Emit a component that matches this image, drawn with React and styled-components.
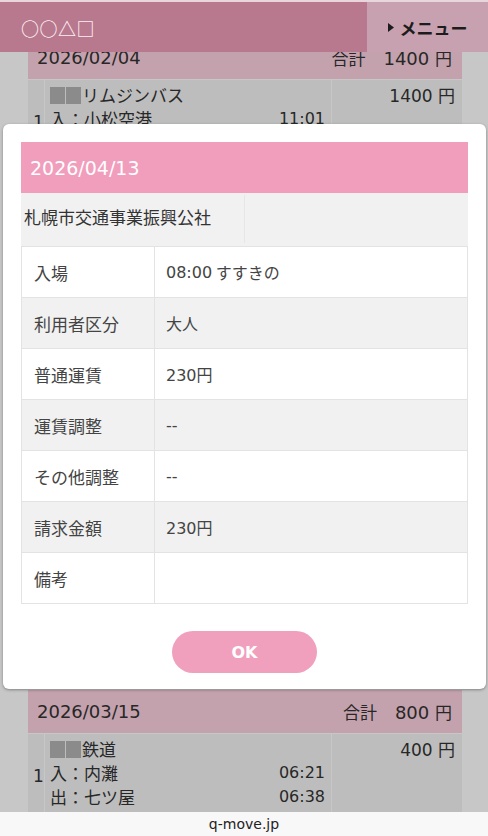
import React from "react";
import styled, { createGlobalStyle } from "styled-components";

const GlobalStyle = createGlobalStyle`
  html, body {
    margin: 0;
    padding: 0;
    background: #ffffff;
  }
  body {
    font-family: "DejaVu Sans", "Noto Sans CJK JP", sans-serif;
    color: #333333;
  }
  * {
    box-sizing: border-box;
  }
`;

const Frame = styled.div`
  width: 488px;
  height: 836px;
  display: flex;
  flex-direction: column;
  overflow: hidden;
`;

const Screen = styled.div`
  position: relative;
  flex: 1;
  overflow: hidden;
  background: #ffffff;
`;

/* the bar stays on top of the dimmed page, with its own darker tones */
const Header = styled.header`
  position: absolute;
  top: 0;
  left: 0;
  right: 0;
  height: 52px;
  display: flex;
  border-top: 2px solid #e9d6dc;
  z-index: 5;
`;

const Title = styled.div`
  flex: 1;
  display: flex;
  align-items: center;
  padding: 2px 0 0 21px;
  background: #b8788e;
  color: #fdeef3;
  font-family: "Noto Sans CJK JP", sans-serif;
  font-weight: 700;
  font-size: 18px;
  letter-spacing: 0.5px;
`;

const MenuButton = styled.div`
  width: 121px;
  display: flex;
  align-items: center;
  justify-content: center;
  gap: 6px;
  padding-top: 1px;
  background: #c8a1b0;
  color: #1c1c1c;
  font-family: "Noto Sans CJK JP", sans-serif;
  font-weight: 700;
  font-size: 17px;

  svg {
    display: block;
  }
`;

const List = styled.div`
  padding: 36px 26px 0 28px;
`;

const Group = styled.section`
  margin-bottom: 5px;
`;

const DateRow = styled.div`
  height: 43px;
  display: flex;
  align-items: center;
  justify-content: space-between;
  padding: 0 10px 0 9px;
  background: #fbd0de;
  font-size: 18px;
  color: #333333;
`;

const Total = styled.div`
  display: flex;
  align-items: center;

  span + span {
    margin-left: 18px;
  }
`;

const Label = styled.span`
  font-family: "Noto Sans CJK JP", sans-serif;
  font-size: 17px;
`;

const ItemRow = styled.div`
  display: grid;
  grid-template-columns: 17px 287px 1fr;
  background: #f3f3f3;
  border-top: 1px solid #ffffff;
  font-size: 17px;
  line-height: 24px;
`;

const IndexCell = styled.div`
  display: flex;
  align-items: center;
  padding-left: 5px;
  border-right: 1px solid #ffffff;
`;

const DetailCell = styled.div`
  padding: 3px 6px 9px 5px;
  border-right: 1px solid #ffffff;
`;

const Line = styled.div`
  display: flex;
  justify-content: space-between;
  font-family: "Noto Sans CJK JP", sans-serif;
  font-size: 17px;
`;

const Time = styled.span`
  font-family: "DejaVu Sans", sans-serif;
  font-size: 16px;
`;

const Masked = styled.span`
  display: inline-flex;
  gap: 1px;
  vertical-align: -2px;
  margin-right: 1px;

  i {
    display: block;
    width: 15px;
    height: 17px;
    background: #b2b2b2;
  }
`;

const AmountCell = styled.div`
  padding: 3px 7px;
  text-align: right;
`;

const Overlay = styled.div`
  position: absolute;
  inset: 0;
  background: rgba(0, 0, 0, 0.22);
  z-index: 3;
`;

const Modal = styled.div`
  position: absolute;
  top: 124px;
  left: 3px;
  right: 2px;
  z-index: 4;
  background: #ffffff;
  border-radius: 6px;
  box-shadow: 0 1px 3px rgba(0, 0, 0, 0.35);
  padding: 18px 18px 16px;
  display: flex;
  flex-direction: column;
`;

const ModalHead = styled.div`
  height: 51px;
  display: flex;
  align-items: center;
  padding-left: 9px;
  background: #f19ebd;
  color: #ffffff;
  font-size: 19px;
`;

const Company = styled.div`
  height: 53px;
  display: flex;
  background: #f1f1f1;
  font-family: "Noto Sans CJK JP", sans-serif;
  font-size: 17px;
  color: #333333;
`;

const CompanyName = styled.div`
  width: 224px;
  display: flex;
  align-items: center;
  padding: 0 0 6px 3px;
  border-right: 1px solid #e6e6e6;
  margin: 2px 0 3px;
`;

const Table = styled.div`
  border: 1px solid #e3e3e3;
  border-bottom: none;
`;

const Row = styled.div`
  height: 51px;
  display: grid;
  grid-template-columns: 133px 1fr;
  background: ${(p) => (p.$shaded ? "#f1f1f1" : "#ffffff")};
  border-bottom: 1px solid #e3e3e3;
  color: #444444;
`;

const RowLabel = styled.div`
  display: flex;
  align-items: center;
  padding-left: 12px;
  border-right: 1px solid #e3e3e3;
  font-family: "Noto Sans CJK JP", sans-serif;
  font-size: 17px;
`;

const RowValue = styled.div`
  display: flex;
  align-items: center;
  padding-left: 11px;
  font-size: 16px;

  .jp {
    font-family: "Noto Sans CJK JP", sans-serif;
    font-size: 16px;
  }
`;

const OkButton = styled.button`
  align-self: center;
  margin-top: 27px;
  width: 145px;
  height: 42px;
  border: none;
  border-radius: 21px;
  background: #f09fbd;
  color: #ffffff;
  font-family: "DejaVu Sans", sans-serif;
  font-weight: 700;
  font-size: 16px;
  cursor: pointer;
`;

const Footer = styled.footer`
  height: 24px;
  display: flex;
  align-items: center;
  justify-content: center;
  background: #f8f8f8;
  color: #222222;
  font-size: 14px;
`;

const GROUPS = [
  {
    date: "2026/02/04",
    total: "1400",
    items: [
      { name: "リムジンバス", from: "小松空港", in: "11:01", to: "金沢駅西口", out: "11:41", amount: "1400" },
      { name: "鉄道", from: "金沢", in: "12:10", to: "西金沢", out: "12:14", via: "乗換：北陸本線", amount: "200" },
      { name: "バス", from: "香林坊", in: "13:02", to: "兼六園下", out: "13:08", amount: "210" }
    ]
  },
  {
    date: "2026/03/01",
    total: "620",
    items: [
      { name: "鉄道", from: "野町", in: "08:11", to: "鶴来", out: "08:40", via: "乗換：石川線", amount: "400" },
      { name: "バス", from: "金沢駅", in: "09:30", to: "武蔵ヶ辻", out: "09:36", amount: "210" },
      { name: "バス", from: "武蔵ヶ辻", in: "18:02", to: "金沢駅", out: "18:09", amount: "210" }
    ]
  },
  {
    date: "2026/03/15",
    total: "800",
    items: [
      { name: "鉄道", from: "内灘", in: "06:21", to: "七ツ屋", out: "06:38", amount: "400" },
      { name: "鉄道", from: "七ツ屋", in: "17:50", to: "内灘", out: "18:07", amount: "400" }
    ]
  }
];

const DETAIL = [
  { label: "入場", value: "08:00", place: "すすきの" },
  { label: "利用者区分", value: "大人", jp: true },
  { label: "普通運賃", value: "230円" },
  { label: "運賃調整", value: "--" },
  { label: "その他調整", value: "--" },
  { label: "請求金額", value: "230円" },
  { label: "備考", value: "" }
];

function Yen({ value }) {
  return (
    <>
      {value} <Label>円</Label>
    </>
  );
}

function Item({ index, item }) {
  return (
    <ItemRow>
      <IndexCell>{index}</IndexCell>
      <DetailCell>
        <Line>
          <span>
            <Masked>
              <i />
              <i />
            </Masked>
            {item.name}
          </span>
        </Line>
        <Line>
          <span>入：{item.from}</span>
          <Time>{item.in}</Time>
        </Line>
        <Line>
          <span>出：{item.to}</span>
          <Time>{item.out}</Time>
        </Line>
        {item.via && (
          <Line>
            <span>{item.via}</span>
          </Line>
        )}
      </DetailCell>
      <AmountCell>
        <Yen value={item.amount} />
      </AmountCell>
    </ItemRow>
  );
}

function DetailValue({ row }) {
  if (row.jp) return <span className="jp">{row.value}</span>;
  if (row.value.endsWith("円")) {
    return (
      <span>
        {row.value.slice(0, -1)}
        <span className="jp">円</span>
      </span>
    );
  }
  return (
    <>
      <span>{row.value}</span>
      {row.place && <span className="jp">&nbsp;{row.place}</span>}
    </>
  );
}

export default function App() {
  return (
    <Frame>
      <GlobalStyle />
      <Screen>
        <Header>
          <Title>○○△□</Title>
          <MenuButton>
            <svg width="6" height="9" viewBox="0 0 6 9">
              <path d="M0 0 L6 4.5 L0 9 Z" fill="#1c1c1c" />
            </svg>
            メニュー
          </MenuButton>
        </Header>

        <List>
          {GROUPS.map((group) => (
            <Group key={group.date}>
              <DateRow>
                <span>{group.date}</span>
                <Total>
                  <Label>合計</Label>
                  <span>
                    <Yen value={group.total} />
                  </span>
                </Total>
              </DateRow>
              {group.items.map((item, i) => (
                <Item key={i} index={1} item={item} />
              ))}
            </Group>
          ))}
        </List>

        <Overlay />

        <Modal>
          <ModalHead>2026/04/13</ModalHead>
          <Company>
            <CompanyName>札幌市交通事業振興公社</CompanyName>
          </Company>
          <Table>
            {DETAIL.map((row, i) => (
              <Row key={row.label} $shaded={i % 2 === 1}>
                <RowLabel>{row.label}</RowLabel>
                <RowValue>
                  <DetailValue row={row} />
                </RowValue>
              </Row>
            ))}
          </Table>
          <OkButton type="button">OK</OkButton>
        </Modal>
      </Screen>
      <Footer>q-move.jp</Footer>
    </Frame>
  );
}
